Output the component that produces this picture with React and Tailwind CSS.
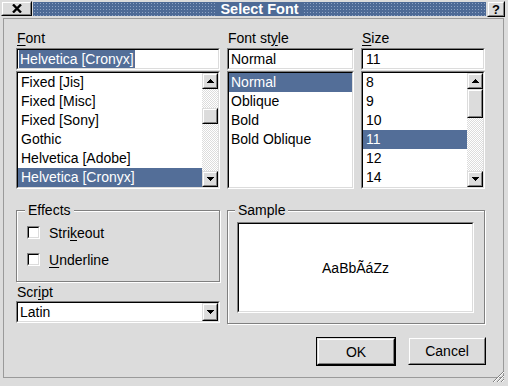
import React from "react";

const hl = "bg-[#536e98] text-white";

function Sunken({ className = "", children }) {
  return (
    <div className={`flex border border-t-[#808080] border-l-[#808080] border-r-white border-b-white ${className}`}>
      <div className="flex min-w-0 flex-1 border border-t-black border-l-black border-r-[#dcdcdc] border-b-[#dcdcdc] bg-white">
        {children}
      </div>
    </div>
  );
}

function Raised({ className = "", children }) {
  return (
    <div className={`flex border border-t-[#dcdcdc] border-l-[#dcdcdc] border-r-black border-b-black ${className}`}>
      <div className="flex flex-1 items-center justify-center border border-t-white border-l-white border-r-[#808080] border-b-[#808080] bg-[#dcdcdc]">
        {children}
      </div>
    </div>
  );
}

function Tri({ down }) {
  const rows = down ? [7, 5, 3, 1] : [1, 3, 5, 7];
  return (
    <svg width="7" height="4" viewBox="0 0 7 4" shapeRendering="crispEdges">
      {rows.map((w, i) => (
        <rect key={i} x={(7 - w) / 2} y={i} width={w} height="1" fill="#000" />
      ))}
    </svg>
  );
}

function ScrollBar({ thumb }) {
  return (
    <div className="flex w-[16px] shrink-0 flex-col bg-[image:repeating-conic-gradient(#dcdcdc_0_25%,#fff_0_50%)] bg-[length:2px_2px]">
      <Raised className="h-[16px] shrink-0">
        <Tri />
      </Raised>
      <div className="flex flex-1 flex-col">
        <Raised className={thumb} />
      </div>
      <Raised className="h-[16px] shrink-0">
        <Tri down />
      </Raised>
    </div>
  );
}

function List({ items, selected, pad, scroll }) {
  return (
    <Sunken className="mt-[1px] h-[118px]">
      <div className="min-w-0 flex-1">
        {items.map((t) => (
          <div key={t} className={`h-[19px] whitespace-nowrap leading-[19px] ${pad} ${t === selected ? hl : ""}`}>
            {t}
          </div>
        ))}
      </div>
      {scroll}
    </Sunken>
  );
}

function Check({ children }) {
  return (
    <div className="flex h-[19px] items-center">
      <Sunken className="ml-[10px] h-[13px] w-[13px] shrink-0" />
      <span className="ml-[9px]">{children}</span>
    </div>
  );
}

const U = ({ children }) => <span className="underline underline-offset-2">{children}</span>;

export default function App() {
  return (
    <div className="relative flex h-[386px] w-[508px] flex-col overflow-hidden bg-[#dcdcdc] pb-[8px] font-['Liberation_Sans',Arial,sans-serif] text-[14px] leading-[16px] text-black">
      {/* title bar */}
      <div className="flex h-[18px] shrink-0 items-start pl-[1px] pr-[3px] pt-[1px]">
        <Raised className="h-[15px] w-[31px] shrink-0">
          <svg width="10" height="9" viewBox="0 0 10 9">
            <path d="M1 0.5L9 8.5M9 0.5L1 8.5" stroke="#000" strokeWidth="2.4" />
          </svg>
        </Raised>
        <div className="ml-[1px] mt-[1px] flex h-[14px] flex-1 items-center justify-center bg-[#4d6a96] bg-[image:radial-gradient(circle,#8da2c3_0.8px,transparent_1px)] bg-[length:3px_3px]">
          <span className="bg-[#4d6a96] px-[4px] text-[14.5px] font-bold leading-[14px] text-white">Select Font</span>
        </div>
        <Raised className="ml-[1px] h-[16px] w-[18px] shrink-0">
          <span className="text-[13px] font-bold leading-none">?</span>
        </Raised>
      </div>

      {/* client */}
      <div className="ml-[3px] mr-[4px] flex flex-1 flex-col border border-[#9a9a9a] pl-[12px] pr-[17px] pt-[11px]">
        <div className="flex gap-[7px]">
          <div className="flex w-[204px] flex-col">
            <div className="h-[16px] pl-[1px]">
              <U>F</U>ont
            </div>
            <Sunken className="mt-[2px] h-[22px]">
              <div className="flex-1 pl-[1px] leading-[18px]">
                <span className={`inline-block px-[1px] ${hl}`}>Helvetica [Cronyx]</span>
              </div>
            </Sunken>
            <List
              items={["Fixed [Jis]", "Fixed [Misc]", "Fixed [Sony]", "Gothic", "Helvetica [Adobe]", "Helvetica [Cronyx]"]}
              selected="Helvetica [Cronyx]"
              pad="pl-[3px]"
              scroll={<ScrollBar thumb="mt-[19px] h-[16px]" />}
            />
          </div>
          <div className="flex w-[127px] flex-col">
            <div className="h-[16px] pl-[1px]">
              Font st<U>y</U>le
            </div>
            <Sunken className="mt-[2px] h-[22px]">
              <div className="flex-1 pl-[2px] leading-[18px]">Normal</div>
            </Sunken>
            <List items={["Normal", "Oblique", "Bold", "Bold Oblique"]} selected="Normal" pad="pl-[2px]" />
          </div>
          <div className="flex w-[124px] flex-col">
            <div className="h-[16px] pl-[1px]">
              <U>S</U>ize
            </div>
            <Sunken className="mt-[2px] h-[22px]">
              <div className="flex-1 pl-[3px] leading-[18px]">11</div>
            </Sunken>
            <List
              items={["8", "9", "10", "11", "12", "14"]}
              selected="11"
              pad="pl-[3px]"
              scroll={<ScrollBar thumb="h-[29px]" />}
            />
          </div>
        </div>

        <div className="mt-[13px] flex items-start gap-[7px]">
          <div className="flex w-[204px] flex-col">
            <fieldset className="border border-[#808080] pb-[12px] shadow-[inset_1px_1px_0_#fff,1px_1px_0_#fff]">
              <legend className="ml-[8px] bg-[#dcdcdc] px-[3px] leading-[16px]">Effects</legend>
              <div className="mt-[5px]">
                <Check>
                  Stri<U>k</U>eout
                </Check>
              </div>
              <div className="mt-[8px]">
                <Check>
                  <U>U</U>nderline
                </Check>
              </div>
            </fieldset>
            <div className="mt-[2px] h-[16px] pl-[1px]">
              Scr<U>i</U>pt
            </div>
            <Sunken className="mt-[1px] h-[22px]">
              <div className="flex-1 pl-[2px] leading-[18px]">Latin</div>
              <Raised className="w-[16px] shrink-0">
                <Tri down />
              </Raised>
            </Sunken>
          </div>
          <fieldset className="w-[258px] border border-[#808080] pb-[10px] shadow-[inset_1px_1px_0_#fff,1px_1px_0_#fff]">
            <legend className="ml-[7px] bg-[#dcdcdc] px-[3px] leading-[16px]">Sample</legend>
            <Sunken className="ml-[9px] mt-[4px] h-[91px] w-[237px]">
              <div className="flex flex-1 items-center justify-center">AaBbÃáZz</div>
            </Sunken>
          </fieldset>
        </div>

        <div className="mt-[13px] flex items-start justify-end">
          <div className="flex h-[29px] w-[80px] border border-black">
            <Raised className="flex-1">OK</Raised>
          </div>
          <Raised className="ml-[12px] h-[28px] w-[78px]">Cancel</Raised>
        </div>
      </div>

      <svg className="absolute bottom-[3px] right-[3px]" width="14" height="14" viewBox="0 0 14 14">
        <path d="M13 2L2 13M13 6L6 13M13 10L10 13" stroke="#808080" strokeWidth="1" />
        <path d="M13 3L3 13M13 7L7 13M13 11L11 13" stroke="#fff" strokeWidth="1" />
      </svg>
    </div>
  );
}
